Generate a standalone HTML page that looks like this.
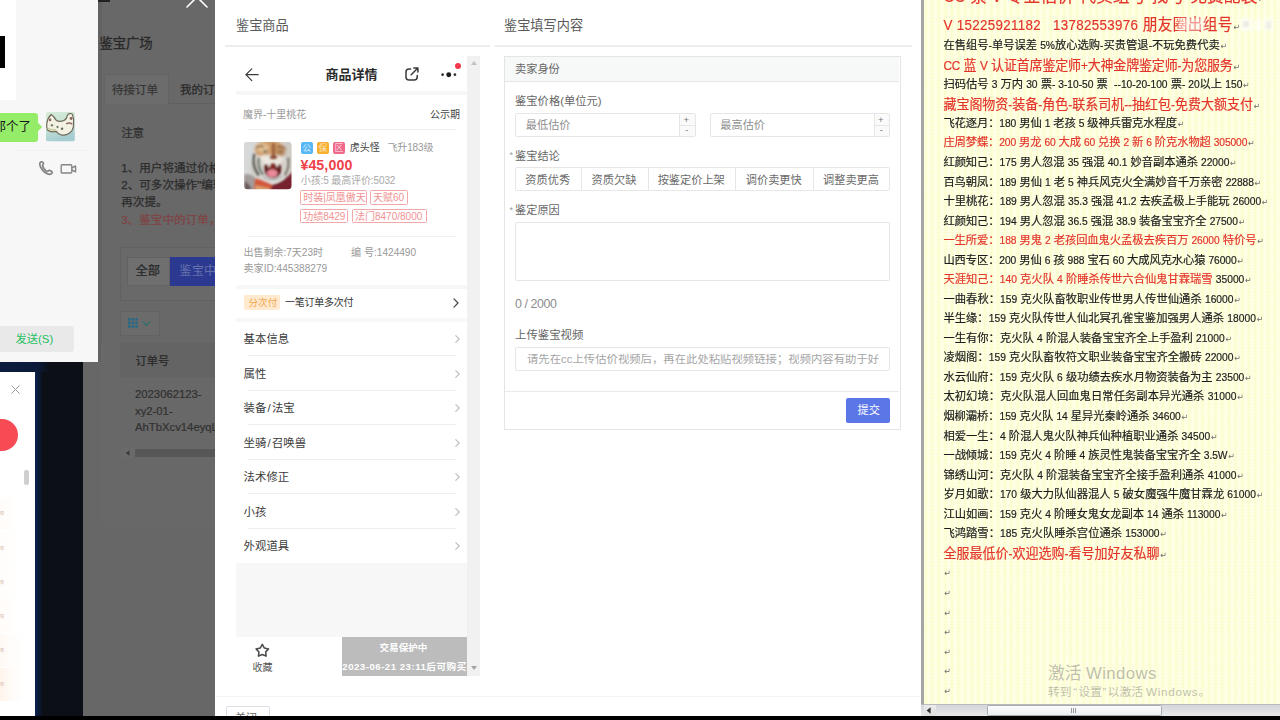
<!DOCTYPE html>
<html lang="zh-CN"><head><meta charset="utf-8"><title>鉴宝广场</title>
<style>
*{margin:0;padding:0;box-sizing:border-box}
html,body{width:1280px;height:720px;overflow:hidden;background:#fff}
body{position:relative;font-family:"Liberation Sans","Noto Sans CJK SC",sans-serif;color:#333;-webkit-font-smoothing:antialiased}
.a{position:absolute}
.t{position:absolute;white-space:nowrap;line-height:1}
.b{font-weight:bold}
svg{position:absolute;overflow:visible}
.d{white-space:pre}
.d i{font-style:normal;font-size:0.91em}
.d b{font-weight:normal;font-size:8px;color:#6e6e6e;margin-left:0.5px;font-family:"DejaVu Sans",sans-serif;letter-spacing:0}
.d{transform:scaleY(1.05);transform-origin:0 50%}
#stage{position:absolute;left:0;top:0;width:1280px;height:720px;overflow:hidden}
.d{-webkit-text-stroke:0.18px currentColor}
.d b{-webkit-text-stroke:0}
</style></head>
<body>
<div id="stage">
<!-- chat window -->
<div class="a " style="left:0px;top:0px;width:99px;height:361.5px;background:#f7f7f7"></div>
<div class="a " style="left:0px;top:0px;width:16px;height:100px;background:#fff"></div>
<div class="a " style="left:0px;top:36px;width:5px;height:32px;background:#000"></div>
<div class="a " style="left:16px;top:150px;width:72px;height:1px;background:#f2f2f2"></div>
<div class="a " style="left:0px;top:113px;width:37.5px;height:29px;background:#95ec69;border-radius:0 3px 3px 0"></div>
<div class="a " style="left:35px;top:124px;width:6px;height:6px;background:#95ec69;transform:rotate(45deg)"></div>
<div class="t " style="left:-6.5px;top:121.3px;font-size:12.5px;color:#161616;">那个了</div>
<svg style="left:45.6px;top:112.4px" width="28.8" height="29.2" viewBox="0 0 28 28" preserveAspectRatio="none"><defs><linearGradient id="av" x1="0" y1="0" x2="0.3" y2="1"><stop offset="0" stop-color="#d6ecd6"/><stop offset="0.55" stop-color="#c6e2d4"/><stop offset="1" stop-color="#a6cdd2"/></linearGradient><filter id="ab" x="-20%" y="-20%" width="140%" height="140%"><feGaussianBlur stdDeviation="0.45"/></filter></defs><rect width="28" height="28" rx="1.5" fill="url(#av)"/><g filter="url(#ab)"><path d="M0.8 10.8 Q1.6 5.6 5.1 2.4 Q8.2 4.6 9.4 7.4 Q12.6 10.2 17.4 8.2 Q20.2 7 20.6 3.6 Q22.6 0.2 25.6 2.2 Q27.6 6.8 26.8 12.4 Q26.6 17.6 22.6 20.4 Q18.6 23.2 14.4 21.8 Q11.6 21 10 18.6 Q5 19.8 1.6 17.6 Q0.2 14.4 0.8 10.8Z" fill="#f3f1e3" stroke="#6f6a5c" stroke-width="1.15" stroke-linejoin="round"/><path d="M1.6 15.8 Q5.6 17.8 10 17" stroke="#c9cfa2" stroke-width="1.6" fill="none"/><circle cx="4" cy="7.6" r="1.25" fill="#8a6a58"/><circle cx="5.8" cy="12.6" r="1.2" fill="#7c8a70"/><circle cx="11.2" cy="14.4" r="1.1" fill="#6f7e68"/><circle cx="15.6" cy="16" r="1.2" fill="#6a6a5a"/><circle cx="24.4" cy="6.2" r="1.4" fill="#8a6458"/><path d="M19.6 11.4 Q22.6 9.6 25.6 11.6" stroke="#8a6a64" stroke-width="1.3" fill="none"/></g></svg>
<svg style="left:38px;top:160px" width="16" height="16" viewBox="0 0 16 16" fill="none" stroke="#858585" stroke-width="1.7" stroke-linecap="round" stroke-linejoin="round"><path d="M3.2 1.8 C1.6 2.6 1.4 4.6 2.6 7 C4.2 10.2 6.6 12.6 9.6 13.9 C11.8 14.8 13.6 14.2 14.2 12.6 C14.4 12 14 11.5 13.4 11.2 L11.6 10.4 C11 10.2 10.6 10.4 10.2 10.9 C9.6 11.6 8.8 11.4 7.8 10.6 C6.4 9.4 5.4 8 4.8 6.4 C4.4 5.4 4.8 4.8 5.2 4.4 C5.6 4 5.6 3.4 5.2 2.8 C4.6 2 4 1.6 3.2 1.8Z"/></svg>
<svg style="left:60px;top:163px" width="18" height="12" viewBox="0 0 18 12" fill="none" stroke="#858585" stroke-width="1.4" stroke-linejoin="round"><rect x="1.2" y="1.8" width="10.6" height="8.2" rx="1"/><path d="M12 4.8 L15.6 3 V8.8 L12 7"/></svg>
<div class="a " style="left:0px;top:326px;width:74px;height:26px;background:#e9e9e9;border-radius:0 3px 3px 0"></div>
<div class="t " style="left:15.5px;top:333.6px;font-size:11.3px;color:#1fc063;">发送(S)</div>
<!-- desktop / lower-left window -->
<div class="a " style="left:0px;top:362px;width:83px;height:354px;background:#0c0f16"></div>
<div class="a " style="left:0px;top:362px;width:83px;height:10px;background:linear-gradient(90deg,#0b1c3e,#0b1a38 45%,#0c0f16 60%)"></div>
<div class="a " style="left:35px;top:372px;width:7px;height:344px;background:linear-gradient(90deg,#0a2350,#0c1220)"></div>
<div class="a " style="left:0px;top:372px;width:35px;height:344px;background:#fff"></div>
<svg style="left:11px;top:385px" width="9" height="9" viewBox="0 0 9 9" stroke="#9a9a9a" stroke-width="1" fill="none"><path d="M0.5 0.5 L8.5 8.5 M8.5 0.5 L0.5 8.5"/></svg>
<div class="a " style="left:-14px;top:418.5px;width:32px;height:32px;background:#f64b55;border-radius:50%"></div>
<div class="a " style="left:24px;top:470px;width:5px;height:14.5px;background:#cfcfcf;border-radius:2px"></div>
<div class="a " style="left:0px;top:497px;width:24px;height:33px;background:linear-gradient(90deg,rgba(255,236,220,0.2),rgba(255,246,238,0.12) 60%,rgba(255,255,255,0))"></div>
<div class="t " style="left:-4px;top:512px;font-size:4px;color:#d3bcae;letter-spacing:0">详情</div>
<div class="a " style="left:0px;top:532px;width:24px;height:33px;background:linear-gradient(90deg,rgba(255,236,220,0.12),rgba(255,246,238,0.072) 60%,rgba(255,255,255,0))"></div>
<div class="t " style="left:-4px;top:547px;font-size:4px;color:#d3bcae;letter-spacing:0">详情</div>
<div class="a " style="left:0px;top:566px;width:24px;height:33px;background:linear-gradient(90deg,rgba(255,236,220,0.12),rgba(255,246,238,0.072) 60%,rgba(255,255,255,0))"></div>
<div class="t " style="left:-4px;top:581px;font-size:4px;color:#d3bcae;letter-spacing:0">详情</div>
<div class="a " style="left:0px;top:600px;width:24px;height:33px;background:linear-gradient(90deg,rgba(255,236,220,0.18),rgba(255,246,238,0.108) 60%,rgba(255,255,255,0))"></div>
<div class="t " style="left:-4px;top:615px;font-size:4px;color:#d3bcae;letter-spacing:0">详情</div>
<div class="a " style="left:0px;top:634px;width:24px;height:33px;background:linear-gradient(90deg,rgba(255,236,220,0.35),rgba(255,246,238,0.21) 60%,rgba(255,255,255,0))"></div>
<div class="t " style="left:-4px;top:649px;font-size:4px;color:#d3bcae;letter-spacing:0">详情</div>
<div class="a " style="left:0px;top:668px;width:24px;height:33px;background:linear-gradient(90deg,rgba(255,236,220,0.55),rgba(255,246,238,0.33) 60%,rgba(255,255,255,0))"></div>
<div class="t " style="left:-4px;top:683px;font-size:4px;color:#d3bcae;letter-spacing:0">详情</div>
<!-- dimmed page -->
<div class="a " style="left:98px;top:0px;width:117px;height:362px;background:#686868"></div>
<div class="a " style="left:83px;top:362px;width:132px;height:354px;background:#676767"></div>
<div class="a " style="left:98px;top:0px;width:4px;height:362px;background:#626262"></div>
<div class="a " style="left:98px;top:0px;width:12px;height:1.5px;background:#222"></div>
<svg style="left:186px;top:-14px" width="22" height="22" viewBox="0 0 22 22" stroke="#fff" stroke-width="1.6" fill="none" stroke-linecap="round"><path d="M1 1 L21 21 M21 1 L1 21"/></svg>
<div class="t " style="left:99.4px;top:36.6px;font-size:13.3px;color:#282828;-webkit-text-stroke:0.3px #282828">鉴宝广场</div>
<div class="a " style="left:104px;top:74px;width:65px;height:30px;background:#6c6c6c;border:1px solid #636363;border-bottom:none"></div>
<div class="t " style="left:112px;top:84.6px;font-size:11.5px;color:#363636;-webkit-text-stroke:0.25px #363636">待接订单</div>
<div class="t " style="left:180px;top:84.6px;font-size:11.5px;color:#2a2a2a;-webkit-text-stroke:0.25px #2a2a2a">我的订单</div>
<div class="a " style="left:169px;top:103px;width:47px;height:1px;background:#606060"></div>
<div class="t " style="left:121.6px;top:127.8px;font-size:11.2px;color:#2e2e2e;-webkit-text-stroke:0.25px #2e2e2e">注意</div>
<div class="t " style="left:121.2px;top:162px;font-size:11.6px;color:#2c2c2c;-webkit-text-stroke:0.25px #2c2c2c">1、用户将通过价格</div>
<div class="t " style="left:121.2px;top:179.3px;font-size:11.6px;color:#2c2c2c;-webkit-text-stroke:0.25px #2c2c2c">2、可多次操作"编辑</div>
<div class="t " style="left:121.2px;top:195.6px;font-size:11.6px;color:#2c2c2c;-webkit-text-stroke:0.25px #2c2c2c">再次提。</div>
<div class="t " style="left:121.2px;top:213.6px;font-size:11.6px;color:#804242;-webkit-text-stroke:0.2px #804242">3、鉴宝中的订单，</div>
<div class="a " style="left:120.2px;top:247px;width:96px;height:54px;background:#696969;border:1px solid #616161;border-right:none"></div>
<div class="a " style="left:127.2px;top:256.8px;width:43px;height:29px;background:#6f6f6f;border:1px solid #626262"></div>
<div class="t " style="left:135.6px;top:264.6px;font-size:12.2px;color:#2a2a2a;-webkit-text-stroke:0.25px #2a2a2a">全部</div>
<div class="a " style="left:169.8px;top:256.8px;width:46.2px;height:29px;background:#2b3a90"></div>
<div class="t " style="left:179.6px;top:264.8px;font-size:12.2px;color:#6670ad;">鉴宝中</div>
<div class="a " style="left:120.2px;top:311px;width:39.6px;height:24.6px;background:#6b6b6b;border:1px solid #636363"></div>
<svg style="left:128px;top:318px" width="26" height="10" viewBox="0 0 26 10"><g fill="#286a84"><rect x="0" y="0" width="2.6" height="2.6"/><rect x="3.6" y="0" width="2.6" height="2.6"/><rect x="7.2" y="0" width="2.6" height="2.6"/><rect x="0" y="3.6" width="2.6" height="2.6"/><rect x="3.6" y="3.6" width="2.6" height="2.6"/><rect x="7.2" y="3.6" width="2.6" height="2.6"/><rect x="0" y="7.2" width="2.6" height="2.6"/><rect x="3.6" y="7.2" width="2.6" height="2.6"/><rect x="7.2" y="7.2" width="2.6" height="2.6"/></g><path d="M15 3.5 L18.5 7.5 L22 3.5" stroke="#2f6f6a" stroke-width="1.2" fill="none"/></svg>
<div class="a " style="left:101px;top:343px;width:115px;height:183px;background:#686868"></div>
<div class="a " style="left:120.2px;top:343px;width:96px;height:34px;background:#646464"></div>
<div class="t " style="left:135.6px;top:355.6px;font-size:11.2px;color:#2a2a2a;-webkit-text-stroke:0.25px #2a2a2a">订单号</div>
<div class="t " style="left:135px;top:389px;font-size:11.3px;color:#303030;-webkit-text-stroke:0.2px #303030">2023062123-</div>
<div class="t " style="left:135px;top:406px;font-size:11.3px;color:#303030;-webkit-text-stroke:0.2px #303030">xy2-01-</div>
<div class="t " style="left:135px;top:422.2px;font-size:11.3px;color:#303030;width:81px;overflow:hidden;-webkit-text-stroke:0.2px #303030">AhTbXcv14eyqLm</div>
<div class="a " style="left:122px;top:448px;width:94px;height:9.5px;background:#6a6a6a"></div>
<div class="a " style="left:135px;top:448.5px;width:81px;height:8.5px;background:#575757"></div>
<svg style="left:125px;top:450px" width="5" height="6" viewBox="0 0 5 6"><path d="M4.5 0.3 L0.8 3 L4.5 5.7Z" fill="#3a3a3a"/></svg>
<!-- modal -->
<div class="a " style="left:215.3px;top:0px;width:705.2px;height:716px;background:#fff"></div>
<div class="t " style="left:236px;top:18.5px;font-size:13.2px;color:#5a5a5a;">鉴宝商品</div>
<div class="t " style="left:504px;top:18.5px;font-size:13.2px;color:#5a5a5a;">鉴宝填写内容</div>
<div class="a " style="left:225px;top:45px;width:265px;height:1.5px;background:#ededed"></div>
<div class="a " style="left:495px;top:45px;width:417px;height:1.5px;background:#ededed"></div>
<div class="a " style="left:215.5px;top:696px;width:705px;height:1px;background:#f3f3f3"></div>
<div class="a " style="left:226px;top:706px;width:44px;height:24px;border:1px solid #dcdfe6;border-radius:2px;background:#fff"></div>
<div class="t " style="left:235px;top:713px;font-size:11px;color:#666;">关闭</div>
<!-- phone preview -->
<div class="a " style="left:236px;top:56px;width:231px;height:620px;background:#fff"></div>
<div class="a " style="left:467px;top:56px;width:13px;height:620px;background:#f1f1f1"></div>
<svg style="left:470.5px;top:61px" width="6" height="4" viewBox="0 0 6 4"><path d="M3 0 L6 4 H0Z" fill="#c2c2c2"/></svg>
<svg style="left:470.5px;top:666px" width="6" height="4" viewBox="0 0 6 4"><path d="M0 0 H6 L3 4Z" fill="#a3a3a3"/></svg>
<svg style="left:245px;top:68px" width="14" height="14" viewBox="0 0 14 14" fill="none" stroke="#3a3a3a" stroke-width="1.2" stroke-linecap="round" stroke-linejoin="round"><path d="M13.2 6.7 H1 M6.8 0.8 L0.9 6.7 L6.8 12.6"/></svg>
<div class="t " style="left:325.5px;top:68px;font-size:13px;color:#2a2a2a;font-weight:bold">商品详情</div>
<svg style="left:405.2px;top:67.1px" width="14" height="14" viewBox="0 0 14 14" fill="none" stroke="#3a3a3a" stroke-width="1.5" stroke-linecap="round" stroke-linejoin="round"><path d="M5.6 1.9 H4 Q1 1.9 1 4.9 V9.9 Q1 12.9 4 12.9 H9.2 Q12.2 12.9 12.2 9.9 V8.6"/><path d="M8.8 1 H12.9 V5.1 M12.6 1.3 L6.2 7.7"/></svg>
<svg style="left:440px;top:70px" width="18" height="10" viewBox="0 0 18 10"><circle cx="2.6" cy="4.7" r="1.35" fill="#333"/><circle cx="8.75" cy="4.7" r="2.45" fill="#1c1c1c"/><circle cx="14.9" cy="4.7" r="1.35" fill="#333"/></svg>
<div class="a " style="left:454.8px;top:62.9px;width:6.2px;height:6.2px;background:#f0394b;border-radius:50%"></div>
<div class="a " style="left:236px;top:91.3px;width:231px;height:4px;background:#f6f6f6"></div>
<div class="t " style="left:243px;top:109.5px;font-size:10px;color:#9a9a9a;">魔界-十里桃花</div>
<div class="t " style="left:430px;top:109.5px;font-size:10px;color:#444;">公示期</div>
<div class="a " style="left:248px;top:129px;width:208px;height:1px;background:#eeeeee"></div>
<svg style="left:244.4px;top:141.9px" width="47.5" height="47.2" viewBox="0 0 48 48" preserveAspectRatio="none"><defs><clipPath id="tc"><rect width="48" height="48" rx="3.5"/></clipPath><filter id="tb" x="-30%" y="-30%" width="160%" height="160%"><feGaussianBlur stdDeviation="0.9"/></filter><filter id="tb2" x="-30%" y="-30%" width="160%" height="160%"><feGaussianBlur stdDeviation="1.8"/></filter></defs><g clip-path="url(#tc)"><rect width="48" height="48" fill="#d9d6d2"/><g filter="url(#tb2)"><rect x="-4" y="-4" width="13" height="40" fill="#d6d8da"/><rect x="40" y="-4" width="12" height="34" fill="#cfcac4"/><ellipse cx="26" cy="8" rx="15" ry="10" fill="#cf9c68"/><ellipse cx="19" cy="6" rx="6" ry="4.5" fill="#e2bf96"/><ellipse cx="37" cy="9" rx="5" ry="6" fill="#bd8a5c"/><ellipse cx="26" cy="20" rx="17" ry="7" fill="#ece8e0"/><ellipse cx="13" cy="26" rx="7" ry="10" fill="#cfcdc6"/><ellipse cx="41" cy="26" rx="5" ry="9" fill="#d6d2cb"/></g><g filter="url(#tb)"><rect x="28" y="1" width="3.6" height="14" rx="1.6" fill="#a0643f"/><ellipse cx="29.8" cy="15.5" rx="3.6" ry="2" fill="#8a4a38"/><ellipse cx="21.5" cy="9.6" rx="2.2" ry="1" fill="#6a6a50"/><ellipse cx="37" cy="10" rx="2" ry="1" fill="#7a6a50"/><path d="M10.5 12 Q7.5 24 15 34" stroke="#4c4c46" stroke-width="2.1" fill="none"/><path d="M15 16 Q13 26 19.5 33.5" stroke="#566058" stroke-width="1.8" fill="none"/><path d="M44.5 16 Q46.5 26 41 34" stroke="#6a625c" stroke-width="1.8" fill="none"/><path d="M12 6 Q16 3 20 5" stroke="#7a5a3c" stroke-width="1.2" fill="none"/><path d="M34 5 Q38 3.5 42 7" stroke="#7a5a3c" stroke-width="1.2" fill="none"/><path d="M20.5 25 Q21 21.5 25 22.5 Q29 21 33.5 22.5 Q38 22 37.5 27 Q38.5 36 29 37 Q20 36.5 20.5 25Z" fill="#5e1f1c"/><ellipse cx="28.6" cy="31.8" rx="5.4" ry="4.1" fill="#ea8a98"/><ellipse cx="28.6" cy="25" rx="4" ry="2" fill="#8a2a22"/><path d="M23.6 21.5 L25.2 27 L26.8 21.8Z M32 22 L33.4 26.6 L35 22Z" fill="#fbf8f2"/><path d="M18 34 Q28 41 40 33 L39.5 38 Q28 44.5 19 39.5Z" fill="#e2e0de"/><path d="M19 35.5 Q28 41.5 39 35" stroke="#6a7470" stroke-width="0.9" fill="none"/><path d="M0 33 Q6 31 11 36 L12 50 L0 50Z" fill="#a49c9a"/><path d="M1 40 Q5 42 8 48 L0 50Z" fill="#6a5a5c"/><path d="M11 37 L20 39.5 L29 43.5 L27 50 L10 50Z" fill="#d2583c"/><path d="M12 44 L26 47 L26 50 L11 50Z" fill="#d9a070"/><path d="M29 43.5 Q40 41 50 29 L50 50 L26 50Z" fill="#77202f"/></g></g></svg>
<div class="a " style="left:300.6px;top:142.2px;width:12px;height:12px;background:#57b7f5;border-radius:2px"></div>
<div class="t " style="left:302.20000000000005px;top:143.8px;font-size:8.8px;color:rgba(255,255,255,0.7);">公</div>
<div class="a " style="left:316.8px;top:142.2px;width:12px;height:12px;background:#f6ae2d;border-radius:2px"></div>
<div class="t " style="left:318.40000000000003px;top:143.8px;font-size:8.8px;color:rgba(255,255,255,0.7);">保</div>
<div class="a " style="left:333px;top:142.2px;width:12px;height:12px;background:#f0688a;border-radius:2px"></div>
<div class="t " style="left:334.6px;top:143.8px;font-size:8.8px;color:rgba(255,255,255,0.7);">区</div>
<div class="t " style="left:349.8px;top:143px;font-size:10px;color:#444;">虎头怪</div>
<div class="t " style="left:387.5px;top:143.1px;font-size:10px;color:#9a9a9a;letter-spacing:-0.15px">飞升183级</div>
<div class="t " style="left:300.4px;top:157.5px;font-size:14.2px;color:#f2404a;font-weight:bold;letter-spacing:0.1px">¥45,000</div>
<div class="t " style="left:300.8px;top:176.4px;font-size:10px;color:#a8a8a8;letter-spacing:-0.12px">小孩:5 最高评价:5032</div>
<div class="a " style="left:300.2px;top:190px;width:66.7px;height:14.6px;border:1px solid #f3a8a8;border-radius:1.5px"></div>
<div class="t " style="left:303.2px;top:193.2px;font-size:10px;color:#f19292;">时装|凤凰傲天</div>
<div class="a " style="left:370px;top:190px;width:37.8px;height:14.6px;border:1px solid #f3a8a8;border-radius:1.5px"></div>
<div class="t " style="left:373px;top:193.2px;font-size:10px;color:#f19292;">天赋60</div>
<div class="a " style="left:300.2px;top:208.8px;width:47.8px;height:14.6px;border:1px solid #f3a8a8;border-radius:1.5px"></div>
<div class="t " style="left:303.2px;top:212.0px;font-size:10px;color:#f19292;">功绩8429</div>
<div class="a " style="left:352px;top:208.8px;width:74.6px;height:14.6px;border:1px solid #f3a8a8;border-radius:1.5px"></div>
<div class="t " style="left:355px;top:212.0px;font-size:10px;color:#f19292;">法门8470/8000</div>
<div class="a " style="left:248px;top:236px;width:208px;height:1px;background:#f0f0f0"></div>
<div class="t " style="left:243.5px;top:248px;font-size:10px;color:#9a9a9a;">出售剩余:7天23时</div>
<div class="t " style="left:351px;top:248px;font-size:10.1px;color:#9a9a9a;">编 号:1424490</div>
<div class="t " style="left:243.5px;top:264.2px;font-size:10.1px;color:#9a9a9a;">卖家ID:445388279</div>
<div class="a " style="left:236px;top:284.5px;width:231px;height:4px;background:#f7f7f7"></div>
<div class="a " style="left:244px;top:294.5px;width:36px;height:15.5px;background:#ffe9cf;border-radius:2px"></div>
<div class="t " style="left:248.5px;top:298.1px;font-size:9.6px;color:#f3a64a;">分次付</div>
<div class="t " style="left:285px;top:298.4px;font-size:10px;color:#333;letter-spacing:-0.25px">一笔订单多次付</div>
<svg style="left:452.5px;top:298px" width="6" height="10" viewBox="0 0 6 10" fill="none" stroke="#444" stroke-width="1.2" stroke-linecap="round" stroke-linejoin="round"><path d="M1 0.8 L5 5 L1 9.2"/></svg>
<div class="a " style="left:236px;top:318px;width:231px;height:4px;background:#f7f7f7"></div>
<div class="t " style="left:243.6px;top:334.4px;font-size:11.4px;color:#3c3c3c;">基本信息</div>
<svg style="left:454.6px;top:335.3px" width="5" height="8" viewBox="0 0 5 8" fill="none" stroke="#bdbdbd" stroke-width="1.1" stroke-linecap="round" stroke-linejoin="round"><path d="M0.8 0.7 L4.2 4 L0.8 7.3"/></svg>
<div class="a " style="left:248px;top:355.2px;width:208px;height:1px;background:#efefef"></div>
<div class="t " style="left:243.6px;top:368.9px;font-size:11.4px;color:#3c3c3c;">属性</div>
<svg style="left:454.6px;top:369.8px" width="5" height="8" viewBox="0 0 5 8" fill="none" stroke="#bdbdbd" stroke-width="1.1" stroke-linecap="round" stroke-linejoin="round"><path d="M0.8 0.7 L4.2 4 L0.8 7.3"/></svg>
<div class="a " style="left:248px;top:389.7px;width:208px;height:1px;background:#efefef"></div>
<div class="t " style="left:243.6px;top:403.4px;font-size:11.4px;color:#3c3c3c;">装备<span style="margin:0 1.2px">/</span>法宝</div>
<svg style="left:454.6px;top:404.3px" width="5" height="8" viewBox="0 0 5 8" fill="none" stroke="#bdbdbd" stroke-width="1.1" stroke-linecap="round" stroke-linejoin="round"><path d="M0.8 0.7 L4.2 4 L0.8 7.3"/></svg>
<div class="a " style="left:248px;top:424.2px;width:208px;height:1px;background:#efefef"></div>
<div class="t " style="left:243.6px;top:437.9px;font-size:11.4px;color:#3c3c3c;">坐骑<span style="margin:0 1.2px">/</span>召唤兽</div>
<svg style="left:454.6px;top:438.8px" width="5" height="8" viewBox="0 0 5 8" fill="none" stroke="#bdbdbd" stroke-width="1.1" stroke-linecap="round" stroke-linejoin="round"><path d="M0.8 0.7 L4.2 4 L0.8 7.3"/></svg>
<div class="a " style="left:248px;top:458.7px;width:208px;height:1px;background:#efefef"></div>
<div class="t " style="left:243.6px;top:472.4px;font-size:11.4px;color:#3c3c3c;">法术修正</div>
<svg style="left:454.6px;top:473.3px" width="5" height="8" viewBox="0 0 5 8" fill="none" stroke="#bdbdbd" stroke-width="1.1" stroke-linecap="round" stroke-linejoin="round"><path d="M0.8 0.7 L4.2 4 L0.8 7.3"/></svg>
<div class="a " style="left:248px;top:493.2px;width:208px;height:1px;background:#efefef"></div>
<div class="t " style="left:243.6px;top:506.9px;font-size:11.4px;color:#3c3c3c;">小孩</div>
<svg style="left:454.6px;top:507.8px" width="5" height="8" viewBox="0 0 5 8" fill="none" stroke="#bdbdbd" stroke-width="1.1" stroke-linecap="round" stroke-linejoin="round"><path d="M0.8 0.7 L4.2 4 L0.8 7.3"/></svg>
<div class="a " style="left:248px;top:527.7px;width:208px;height:1px;background:#efefef"></div>
<div class="t " style="left:243.6px;top:541.4px;font-size:11.4px;color:#3c3c3c;">外观道具</div>
<svg style="left:454.6px;top:542.3px" width="5" height="8" viewBox="0 0 5 8" fill="none" stroke="#bdbdbd" stroke-width="1.1" stroke-linecap="round" stroke-linejoin="round"><path d="M0.8 0.7 L4.2 4 L0.8 7.3"/></svg>
<div class="a " style="left:236px;top:563px;width:231px;height:74.6px;background:#f7f7f7"></div>
<div class="a " style="left:236px;top:637px;width:231px;height:39px;background:#fff"></div>
<svg style="left:254.9px;top:642.9px" width="15" height="15" viewBox="0 0 15 15" fill="none" stroke="#4a4a4a" stroke-width="1.55" stroke-linejoin="round" stroke-linecap="round"><path d="M7.30 1.40 L9.39 5.03 L13.48 5.89 L10.68 9.00 L11.12 13.16 L7.30 11.45 L3.48 13.16 L3.92 9.00 L1.12 5.89 L5.21 5.03Z"/></svg>
<div class="t " style="left:252.6px;top:663px;font-size:10px;color:#555;letter-spacing:-0.2px">收藏</div>
<div class="a " style="left:342px;top:637px;width:125px;height:39px;background:#bcbcbc"></div>
<div class="t " style="left:379.5px;top:642.6px;font-size:9.6px;color:#fff;font-weight:bold">交易保护中</div>
<div class="t " style="left:342.3px;top:662.2px;font-size:9.6px;color:#fff;font-weight:bold;letter-spacing:0.52px">2023-06-21 23:11后可购买</div>
<!-- form card -->
<div class="a " style="left:504.3px;top:56px;width:396.4px;height:373.5px;border:1px solid #e4e4e4;background:#fff"></div>
<div class="a " style="left:505.3px;top:57px;width:394px;height:25px;background:#f7f8f8;border-bottom:1px solid #e6e6e6"></div>
<div class="t " style="left:515px;top:63.5px;font-size:11.2px;color:#666;">卖家身份</div>
<div class="t " style="left:515px;top:96px;font-size:11.3px;color:#666;">鉴宝价格(单位元)</div>
<div class="a " style="left:515px;top:113px;width:180.5px;height:23.8px;border:1px solid #e6e6e6;border-radius:2px;background:#fff"></div>
<div class="a " style="left:679px;top:114px;width:15.5px;height:21.8px;border-left:1px solid #e6e6e6;background:#fafafa"></div>
<div class="a " style="left:679px;top:124.6px;width:15.5px;height:1px;background:#e6e6e6"></div>
<div class="t " style="left:683.6px;top:114.6px;font-size:9.5px;color:#777;">+</div>
<div class="t " style="left:685.2px;top:125.2px;font-size:9.5px;color:#777;">-</div>
<div class="t " style="left:525.8px;top:119.6px;font-size:11.2px;color:#8f8f8f;">最低估价</div>
<div class="a " style="left:709.5px;top:113px;width:180.5px;height:23.8px;border:1px solid #e6e6e6;border-radius:2px;background:#fff"></div>
<div class="a " style="left:873.5px;top:114px;width:15.5px;height:21.8px;border-left:1px solid #e6e6e6;background:#fafafa"></div>
<div class="a " style="left:873.5px;top:124.6px;width:15.5px;height:1px;background:#e6e6e6"></div>
<div class="t " style="left:878.1px;top:114.6px;font-size:9.5px;color:#777;">+</div>
<div class="t " style="left:879.7px;top:125.2px;font-size:9.5px;color:#777;">-</div>
<div class="t " style="left:720.3px;top:119.6px;font-size:11.2px;color:#8f8f8f;">最高估价</div>
<div class="t " style="left:509.6px;top:151px;font-size:9px;color:#999;">*</div>
<div class="t " style="left:515px;top:150.5px;font-size:11.2px;color:#666;">鉴宝结论</div>
<div class="a " style="left:515px;top:167.2px;width:374.5px;height:24px;border:1px solid #e7e7e7;border-radius:2px;background:#fff"></div>
<div class="t" style="left:515px;top:174.9px;width:65.5px;text-align:center;font-size:11.2px;color:#6a6a6a">资质优秀</div>
<div class="a " style="left:580.5px;top:167.2px;width:1px;height:24px;background:#e7e7e7"></div>
<div class="t" style="left:580.5px;top:174.9px;width:67.0px;text-align:center;font-size:11.2px;color:#6a6a6a">资质欠缺</div>
<div class="a " style="left:647.5px;top:167.2px;width:1px;height:24px;background:#e7e7e7"></div>
<div class="t" style="left:647.5px;top:174.9px;width:87.5px;text-align:center;font-size:11.2px;color:#6a6a6a">按鉴定价上架</div>
<div class="a " style="left:735px;top:167.2px;width:1px;height:24px;background:#e7e7e7"></div>
<div class="t" style="left:735px;top:174.9px;width:77.5px;text-align:center;font-size:11.2px;color:#6a6a6a">调价卖更快</div>
<div class="a " style="left:812.5px;top:167.2px;width:1px;height:24px;background:#e7e7e7"></div>
<div class="t" style="left:812.5px;top:174.9px;width:77.0px;text-align:center;font-size:11.2px;color:#6a6a6a">调整卖更高</div>
<div class="t " style="left:509.6px;top:205.6px;font-size:9px;color:#999;">*</div>
<div class="t " style="left:515px;top:205.2px;font-size:11.2px;color:#666;">鉴定原因</div>
<div class="a " style="left:515px;top:222.2px;width:374.5px;height:59.2px;border:1px solid #e6e6e6;border-radius:2px;background:#fff"></div>
<div class="t " style="left:515px;top:298.2px;font-size:12.4px;color:#8c8c8c;letter-spacing:-0.42px">0 / 2000</div>
<div class="t " style="left:515px;top:330.2px;font-size:11.4px;color:#666;">上传鉴宝视频</div>
<div class="a " style="left:515px;top:347px;width:374.5px;height:23.8px;border:1px solid #e6e6e6;border-radius:2px;background:#fff"></div>
<div class="t " style="left:527px;top:353.8px;font-size:11.37px;color:#a6a6a6;width:353px;overflow:hidden">请先在cc上传估价视频后，再在此处粘贴视频链接；视频内容有助于好</div>
<div class="a " style="left:505.3px;top:391px;width:394px;height:1px;background:#eaeaea"></div>
<div class="a " style="left:846.2px;top:398.2px;width:44px;height:24.4px;background:#5b76e6;border-radius:2px"></div>
<div class="t " style="left:857.6px;top:404.6px;font-size:11.2px;color:#fff;">提交</div>
<!-- word document -->
<div class="a " style="left:920.5px;top:0px;width:3.5px;height:716px;background:#a6a6a6"></div>
<div class="a " style="left:924px;top:0px;width:356px;height:704px;background-color:#fefedf;background-image:radial-gradient(circle at 1.6px 1.6px,rgba(246,252,176,0.55) 0.7px,rgba(246,252,176,0) 1.5px),radial-gradient(circle at 4.9px 0.2px,rgba(255,255,255,0.7) 0.6px,rgba(255,255,255,0) 1.4px);background-size:6.6px 3.3px"></div>
<div class="t d" style="left:943.4px;top:-10.85px;font-size:16.7px;color:#e3342a;letter-spacing:0.105px"><span id="L0"><i>CC</i> 紫 <i>V</i> 专业估价<i>-</i>代卖组号<i>-</i>找号<i>-</i>免费配装</span><b>↵</b></div>
<div class="t d" style="left:943.4px;top:18.11px;font-size:14.67px;color:#e3342a;letter-spacing:0.338px"><span id="L1"><i>V 15225921182   13782553976</i> 朋友圈出组号</span><b>↵</b></div>
<div class="t d" style="left:943.4px;top:39.73px;font-size:11.3px;color:#1c1c1c;letter-spacing:-0.019px"><span id="L2">在售组号<i>-</i>单号误差 <i>5%</i>放心选购<i>-</i>买贵管退<i>-</i>不玩免费代卖</span><b>↵</b></div>
<div class="t d" style="left:943.4px;top:58.52px;font-size:13px;color:#e3342a;letter-spacing:-0.164px"><span id="L3"><i>CC</i> 蓝 <i>V</i> 认证首席鉴定师<i>+</i>大神金牌鉴定师<i>-</i>为您服务</span><b>↵</b></div>
<div class="t d" style="left:943.4px;top:78.81px;font-size:11.3px;color:#1c1c1c;letter-spacing:-0.018px"><span id="L4">扫码估号 <i>3</i> 万内 <i>30</i> 票<i>- 3-10-50</i> 票  <i>--10-20-100</i> 票<i>- 20</i>以上 <i>150</i></span><b>↵</b></div>
<div class="t d" style="left:943.4px;top:97.6px;font-size:13px;color:#e3342a;letter-spacing:-0.007px"><span id="L5">藏宝阁物资<i>-</i>装备<i>-</i>角色<i>-</i>联系司机<i>--</i>抽红包<i>-</i>免费大额支付</span><b>↵</b></div>
<div class="t d" style="left:943.4px;top:117.89px;font-size:11.3px;color:#1c1c1c;letter-spacing:-0.105px"><span id="L6">飞花逐月：<i>180</i> 男仙 <i>1</i> 老孩 <i>5</i> 级神兵雷克水程度</span><b>↵</b></div>
<div class="t d" style="left:943.4px;top:137.43px;font-size:11.3px;color:#e3342a;letter-spacing:-0.127px"><span id="L7">庄周梦蝶：<i>200</i> 男龙 <i>60</i> 大成 <i>60</i> 兑换 <i>2</i> 新 <i>6</i> 阶克水物超 <i>305000</i></span><b>↵</b></div>
<div class="t d" style="left:943.4px;top:156.97px;font-size:11.3px;color:#1c1c1c;letter-spacing:-0.057px"><span id="L8">红颜知己：<i>175</i> 男人忽混 <i>35</i> 强混 <i>40.1</i> 妙音副本通杀 <i>22000</i></span><b>↵</b></div>
<div class="t d" style="left:943.4px;top:176.51px;font-size:11.3px;color:#1c1c1c;letter-spacing:-0.076px"><span id="L9">百鸟朝凤：<i>189</i> 男仙 <i>1</i> 老 <i>5</i> 神兵风克火全满妙音千万亲密 <i>22888</i></span><b>↵</b></div>
<div class="t d" style="left:943.4px;top:196.05px;font-size:11.3px;color:#1c1c1c;letter-spacing:-0.035px"><span id="L10">十里桃花：<i>189</i> 男人忽混 <i>35.3</i> 强混 <i>41.2</i> 去疾孟极上手能玩 <i>26000</i></span><b>↵</b></div>
<div class="t d" style="left:943.4px;top:215.59px;font-size:11.3px;color:#1c1c1c;letter-spacing:-0.053px"><span id="L11">红颜知己：<i>194</i> 男人忽混 <i>36.5</i> 强混 <i>38.9</i> 装备宝宝齐全 <i>27500</i></span><b>↵</b></div>
<div class="t d" style="left:943.4px;top:235.13px;font-size:11.3px;color:#e3342a;letter-spacing:-0.074px"><span id="L12">一生所爱：<i>188</i> 男鬼 <i>2</i> 老孩回血鬼火孟极去疾百万 <i>26000</i> 特价号</span><b>↵</b></div>
<div class="t d" style="left:943.4px;top:254.67px;font-size:11.3px;color:#1c1c1c;letter-spacing:-0.104px"><span id="L13">山西专区：<i>200</i> 男仙 <i>6</i> 孩 <i>988</i> 宝石 <i>60</i> 大成风克水心猿 <i>76000</i></span><b>↵</b></div>
<div class="t d" style="left:943.4px;top:274.21px;font-size:11.3px;color:#e3342a;letter-spacing:-0.009px"><span id="L14">天涯知己：<i>140</i> 克火队 <i>4</i> 阶睡杀传世六合仙鬼甘霖瑞雪 <span style="color:#1c1c1c"><i>35000</i></span></span><b>↵</b></div>
<div class="t d" style="left:943.4px;top:293.75px;font-size:11.3px;color:#1c1c1c;letter-spacing:0.032px"><span id="L15">一曲春秋：<i>159</i> 克火队畜牧职业传世男人传世仙通杀 <i>16000</i></span><b>↵</b></div>
<div class="t d" style="left:943.4px;top:313.29px;font-size:11.3px;color:#1c1c1c;letter-spacing:0.021px"><span id="L16">半生缘：<i>159</i> 克火队传世人仙北冥孔雀宝鉴加强男人通杀 <i>18000</i></span><b>↵</b></div>
<div class="t d" style="left:943.4px;top:332.83px;font-size:11.3px;color:#1c1c1c;letter-spacing:0.01px"><span id="L17">一生有你：克火队 <i>4</i> 阶混人装备宝宝齐全上手盈利 <i>21000</i></span><b>↵</b></div>
<div class="t d" style="left:943.4px;top:352.37px;font-size:11.3px;color:#1c1c1c;letter-spacing:0.032px"><span id="L18">凌烟阁：<i>159</i> 克火队畜牧符文职业装备宝宝齐全搬砖 <i>22000</i></span><b>↵</b></div>
<div class="t d" style="left:943.4px;top:371.91px;font-size:11.3px;color:#1c1c1c;letter-spacing:-0.009px"><span id="L19">水云仙府：<i>159</i> 克火队 <i>6</i> 级功绩去疾水月物资装备为主 <i>23500</i></span><b>↵</b></div>
<div class="t d" style="left:943.4px;top:391.45px;font-size:11.3px;color:#1c1c1c;letter-spacing:0.054px"><span id="L20">太初幻境：克火队混人回血鬼日常任务副本异光通杀 <i>31000</i></span><b>↵</b></div>
<div class="t d" style="left:943.4px;top:410.99px;font-size:11.3px;color:#1c1c1c;letter-spacing:-0.063px"><span id="L21">烟柳灞桥：<i>159</i> 克火队 <i>14</i> 星异光秦岭通杀 <i>34600</i></span><b>↵</b></div>
<div class="t d" style="left:943.4px;top:430.53px;font-size:11.3px;color:#1c1c1c;letter-spacing:0.011px"><span id="L22">相爱一生：<i>4</i> 阶混人鬼火队神兵仙种植职业通杀 <i>34500</i></span><b>↵</b></div>
<div class="t d" style="left:943.4px;top:450.07px;font-size:11.3px;color:#1c1c1c;letter-spacing:-0.057px"><span id="L23">一战倾城：<i>159</i> 克火 <i>4</i> 阶睡 <i>4</i> 族灵性鬼装备宝宝齐全 <i>3.5W</i></span><b>↵</b></div>
<div class="t d" style="left:943.4px;top:469.61px;font-size:11.3px;color:#1c1c1c;letter-spacing:0.029px"><span id="L24">锦绣山河：克火队 <i>4</i> 阶混装备宝宝齐全接手盈利通杀 <i>41000</i></span><b>↵</b></div>
<div class="t d" style="left:943.4px;top:489.15px;font-size:11.3px;color:#1c1c1c;letter-spacing:-0.0px"><span id="L25">岁月如歌：<i>170</i> 级大力队仙器混人 <i>5</i> 破女魔强牛魔甘霖龙 <i>61000</i></span><b>↵</b></div>
<div class="t d" style="left:943.4px;top:508.69px;font-size:11.3px;color:#1c1c1c;letter-spacing:-0.051px"><span id="L26">江山如画：<i>159</i> 克火 <i>4</i> 阶睡女鬼女龙副本 <i>14</i> 通杀 <i>113000</i></span><b>↵</b></div>
<div class="t d" style="left:943.4px;top:528.23px;font-size:11.3px;color:#1c1c1c;letter-spacing:0.014px"><span id="L27">飞鸿踏雪：<i>185</i> 克火队睡杀宫位通杀 <i>153000</i></span><b>↵</b></div>
<div class="t d" style="left:943.4px;top:547.02px;font-size:13px;color:#e3342a;letter-spacing:0.014px"><span id="L28">全服最低价<i>-</i>欢迎选购<i>-</i>看号加好友私聊</span><b>↵</b></div>
<div class="t d" style="left:943.4px;top:567.4599999999999px;font-size:11.3px;color:#1c1c1c"><b>↵</b></div>
<div class="t d" style="left:943.4px;top:587.0px;font-size:11.3px;color:#1c1c1c"><b>↵</b></div>
<div class="t d" style="left:943.4px;top:606.54px;font-size:11.3px;color:#1c1c1c"><b>↵</b></div>
<div class="t d" style="left:943.4px;top:626.0799999999999px;font-size:11.3px;color:#1c1c1c"><b>↵</b></div>
<div class="t d" style="left:943.4px;top:645.62px;font-size:11.3px;color:#1c1c1c"><b>↵</b></div>
<div class="t d" style="left:943.4px;top:665.16px;font-size:11.3px;color:#1c1c1c"><b>↵</b></div>
<div class="t d" style="left:943.4px;top:684.6999999999999px;font-size:11.3px;color:#1c1c1c"><b>↵</b></div>
<div class="t " style="left:1048px;top:665.5px;font-size:16.7px;color:rgba(150,150,140,0.62);">激活 <span style="letter-spacing:0.45px">Windows</span></div>
<div class="t " style="left:1048px;top:686.3px;font-size:11.7px;color:rgba(150,150,140,0.62);">转到<span style="margin:0 1.4px 0 1.8px">“</span>设置<span style="margin:0 1.4px 0 0.6px">”</span>以激活 <span style="letter-spacing:0.7px">Windows</span>。</div>
<div class="a" style="left:1183px;top:17px;width:91px;height:15px;filter:blur(0.8px);opacity:0.85"><div class="a" style="left:-5px;top:1px;width:27px;height:13px;background:rgba(255,255,255,0.6)"></div><div class="a" style="left:57px;top:1px;width:12px;height:13px;background:rgba(255,255,255,0.7)"></div><div class="a" style="left:71px;top:2px;width:8px;height:12px;background:rgba(255,255,255,0.6)"></div><div class="a" style="left:81px;top:1px;width:10px;height:13px;background:rgba(255,255,255,0.6)"></div><div class="a" style="left:60px;top:4px;width:6px;height:6px;background:rgba(225,225,225,0.7)"></div><div class="a" style="left:83px;top:4px;width:5px;height:8px;background:rgba(228,228,228,0.7)"></div></div>
<div class="a " style="left:920.5px;top:704px;width:359.5px;height:12px;background:linear-gradient(#d4d7da,#e6e8ea);border-top:1px solid #b9b9b9"></div>
<div class="a " style="left:924px;top:705px;width:12px;height:11px;background:linear-gradient(#ececec,#dedede)"></div>
<svg style="left:926px;top:706.8px" width="5" height="7" viewBox="0 0 5 7"><path d="M4.6 0.2 L0.6 3.5 L4.6 6.8Z" fill="#333"/></svg>
<div class="a " style="left:986.5px;top:704.5px;width:175px;height:11.5px;background:linear-gradient(#fbfcfd,#e9eef2);border:1px solid #a9adb2;border-radius:1.5px"></div>
<div class="a " style="left:1071px;top:707.5px;width:1px;height:5px;background:#999"></div>
<div class="a " style="left:1073px;top:707.5px;width:1px;height:5px;background:#999"></div>
<div class="a " style="left:1075px;top:707.5px;width:1px;height:5px;background:#999"></div>
<div class="a " style="left:0px;top:716px;width:1280px;height:4px;background:#000"></div>
</div>
</body></html>
